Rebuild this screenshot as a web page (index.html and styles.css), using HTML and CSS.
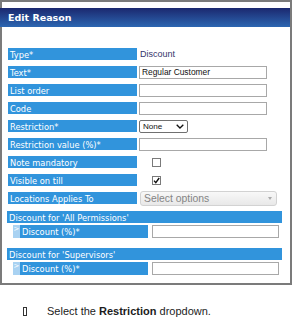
FILE: index.html
```html
<!DOCTYPE html>
<html lang="en">
<head>
  <meta charset="UTF-8" />
  <title>Edit Reason</title>
  <link rel="stylesheet" href="styles.css">
</head>
<body>
  <div class="dialog">
    <div class="dialog-title">Edit Reason</div>

    <div class="form">
      <div class="row">
        <div class="label">Type*</div>
        <span class="static">Discount</span>
      </div>
      <div class="row">
        <div class="label">Text*</div>
        <div class="input">Regular Customer</div>
      </div>
      <div class="row">
        <div class="label">List order</div>
        <div class="input"></div>
      </div>
      <div class="row">
        <div class="label">Code</div>
        <div class="input"></div>
      </div>
      <div class="row">
        <div class="label">Restriction*</div>
        <div class="select">
          <span>None</span>
          <svg width="8" height="5" viewBox="0 0 8 5"><path d="M0.7 0.7 L4 4 L7.3 0.7" fill="none" stroke="#111" stroke-width="1.3"/></svg>
        </div>
      </div>
      <div class="row">
        <div class="label">Restriction value (%)*</div>
        <div class="input"></div>
      </div>
      <div class="row">
        <div class="label">Note mandatory</div>
        <span class="check"></span>
      </div>
      <div class="row">
        <div class="label">Visible on till</div>
        <span class="check">
          <svg width="7" height="7" viewBox="0 0 7 7"><path d="M1 3.6 L2.8 5.6 L6.2 1" fill="none" stroke="#111" stroke-width="1.4"/></svg>
        </span>
      </div>
      <div class="row">
        <div class="label">Locations Applies To</div>
        <div class="multi">Select options<span class="caret"></span></div>
      </div>
    </div>

    <div class="group">
      <div class="group-head">Discount for 'All Permissions'</div>
      <div class="sub-row">
        <span class="arrow">&gt;</span>
        <div class="label sub-label">Discount (%)*</div>
        <div class="input sub-input"></div>
      </div>
    </div>

    <div class="group">
      <div class="group-head">Discount for 'Supervisors'</div>
      <div class="sub-row">
        <span class="arrow">&gt;</span>
        <div class="label sub-label">Discount (%)*</div>
        <div class="input sub-input"></div>
      </div>
    </div>
  </div>

  <p class="note"><span class="bullet"></span>Select the <b>Restriction</b> dropdown.</p>
</body>
</html>
```

FILE: styles.css
```css
body {
  margin: 0;
  background: #fff;
}

.dialog {
  width: 288px;
  border: 2px solid #7b7b7b;
  padding: 6px 0 8px;
  font-family: "DejaVu Sans", Verdana, sans-serif;
}

.dialog-title {
  margin-left: -2px;
  height: 19px;
  padding-left: 8px;
  background: linear-gradient(#1b286f, #2c66b1);
  color: #fff;
  font-weight: bold;
  font-size: 9.5px;
  line-height: 19px;
}

.form {
  display: flex;
  flex-direction: column;
  gap: 6px;
  margin: 21px 0 0 6px;
}

.row {
  display: flex;
  align-items: center;
  gap: 2px;
  height: 12px;
}

.label {
  width: 129px;
  height: 12px;
  box-sizing: border-box;
  padding-left: 2px;
  background: #3194dc;
  color: #fff;
  font-size: 8.3px;
  line-height: 14px;
  white-space: nowrap;
}

.static {
  color: #35356b;
  font: 9px "Liberation Sans", Arial, sans-serif;
  padding-left: 1px;
}

.input {
  width: 128px;
  height: 13px;
  box-sizing: border-box;
  padding-left: 2px;
  border: 1px solid #a8a8a8;
  background: #fff;
  color: #111;
  font: 8.4px/11px "Liberation Sans", Arial, sans-serif;
}

.select {
  width: 49px;
  height: 13px;
  box-sizing: border-box;
  padding: 0 3px 0 3px;
  display: flex;
  align-items: center;
  justify-content: space-between;
  border: 1px solid #707070;
  border-radius: 2px;
  color: #111;
  font: 8.1px "Liberation Sans", Arial, sans-serif;
}

.check {
  width: 9px;
  height: 9px;
  margin-left: 13px;
  box-sizing: border-box;
  border: 1px solid #7a7a7a;
  background: #fff;
  display: flex;
  align-items: center;
  justify-content: center;
}

.multi {
  position: relative;
  width: 137px;
  height: 15px;
  margin-left: 1px;
  box-sizing: border-box;
  padding-left: 3px;
  border: 1px solid #d2d2d2;
  border-radius: 3px;
  background: linear-gradient(#f8f8f8, #e8e8e8);
  color: #858585;
  font: 10.4px/13px "Liberation Sans", Arial, sans-serif;
}

.caret {
  position: absolute;
  right: 4px;
  top: 5px;
  border-left: 2.5px solid transparent;
  border-right: 2.5px solid transparent;
  border-top: 3px solid #aaa;
}

.group {
  margin: 7px 0 0 5px;
  width: 275px;
}

.group + .group {
  margin-top: 10px;
}

.group-head {
  height: 12px;
  padding-left: 2px;
  background: #3194dc;
  color: #fff;
  font-size: 8.3px;
  line-height: 14px;
  white-space: nowrap;
}

.sub-row {
  display: flex;
  height: 13px;
  margin: 2px 0 0 6px;
}

.arrow {
  width: 7px;
  height: 13px;
  background: #a9d2f2;
  color: #fff;
  font-size: 7px;
  line-height: 8px;
  text-align: center;
}

.sub-label {
  width: 128px;
  height: 13px;
}

.sub-input {
  width: 127px;
  margin-left: 4px;
}

.note {
  margin: 20px 0 0;
  padding-left: 23px;
  display: flex;
  align-items: center;
  color: #1c1c1c;
  font: 11px "Liberation Sans", Arial, sans-serif;
  white-space: pre;
}

.bullet {
  width: 4px;
  height: 9px;
  margin-right: 20px;
  box-sizing: border-box;
  border: 1px solid #333;
}
```
